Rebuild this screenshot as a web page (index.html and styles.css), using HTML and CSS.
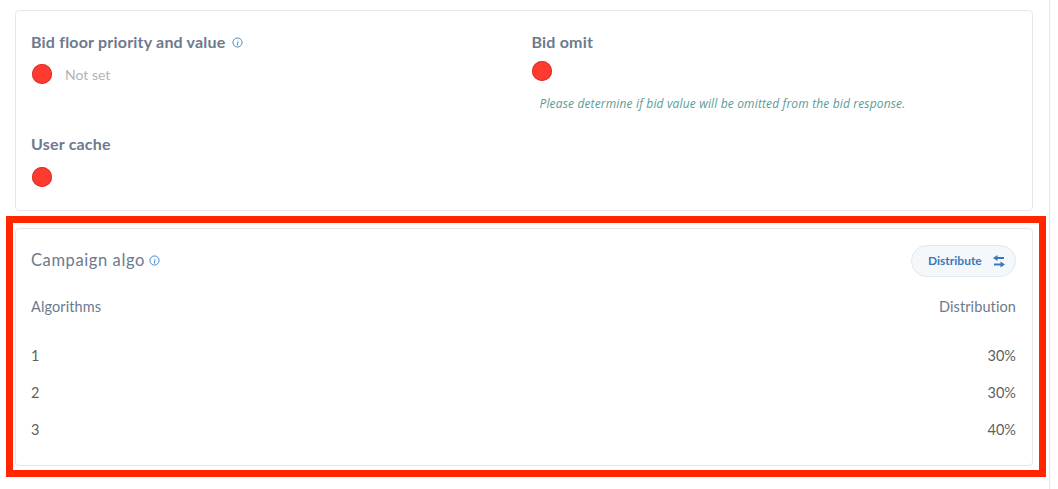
FILE: index.html
```html
<!DOCTYPE html>
<html>
<head>
  <meta charset="UTF-8">
  <title>Campaign settings</title>
  <link rel="stylesheet" href="styles.css">
</head>
<body>
  <div class="page">
    <div class="card card-settings">
      <div class="field">
        <div class="field-label">Bid floor priority and value
          <svg class="info-icon" viewBox="0 0 12 12"><circle cx="6" cy="6" r="5"/><path d="M6.5 3.2v.4M6.1 5.2h.5L5.7 9h.6"/></svg>
        </div>
        <div class="toggle-row toggle-row-first">
          <span class="toggle"></span>
          <span class="not-set">Not set</span>
        </div>
      </div>
      <div class="field">
        <div class="field-label">Bid omit</div>
        <div class="toggle-row">
          <span class="toggle"></span>
        </div>
        <p class="help-text">Please determine if bid value will be omitted from the bid response.</p>
      </div>
      <div class="field field-cache">
        <div class="field-label">User cache</div>
        <div class="toggle-row toggle-row-cache">
          <span class="toggle"></span>
        </div>
      </div>
    </div>

    <div class="highlight">
      <div class="card card-algo">
        <div class="algo-head">
          <div class="algo-title">Campaign algo
            <svg class="info-icon" viewBox="0 0 12 12"><circle cx="6" cy="6" r="5"/><path d="M6.5 3.2v.4M6.1 5.2h.5L5.7 9h.6"/></svg>
          </div>
          <button class="distribute-btn"><span class="btn-text">Distribute</span>
            <svg class="swap-icon" viewBox="0 0 12 13"><path d="M4.5 0L0 3l4.5 3V4H11V2H4.5z"/><path d="M7.5 6.5L12 9.5l-4.5 3v-2H1v-2h6.5z"/></svg>
          </button>
        </div>
        <div class="algo-row algo-row-head"><span>Algorithms</span><span>Distribution</span></div>
        <div class="algo-row algo-row-first"><span>1</span><span>30%</span></div>
        <div class="algo-row"><span>2</span><span>30%</span></div>
        <div class="algo-row"><span>3</span><span>40%</span></div>
      </div>
    </div>
  </div>
</body>
</html>
```

FILE: styles.css
```css
body {
  margin: 0;
  font-family: "Lato", "Open Sans", sans-serif;
  background: #fff;
  overflow: hidden;
}
.page {
  width: 1050px;
  height: 489px;
  box-sizing: border-box;
  border-right: 1px solid #e8e8ea;
  padding-top: 10px;
}
.card {
  width: 1018px;
  box-sizing: border-box;
  background: #fff;
  border: 1px solid #e6e8eb;
  border-radius: 4px;
}
.card-settings {
  margin-left: 15px;
  height: 201px;
  padding: 21px 16px 0 15px;
  display: grid;
  grid-template-columns: 1fr 1fr;
  column-gap: 16px;
  align-content: start;
}
.field {
  height: 102px;
}
.field-cache {
  height: auto;
}
.field-label {
  font-size: 16px;
  font-weight: 700;
  letter-spacing: 0.2px;
  line-height: 20px;
  color: #6c7a8d;
}
.info-icon {
  width: 11px;
  height: 11px;
  margin-left: 2px;
  vertical-align: 0;
  fill: none;
  stroke: #3a82c9;
  stroke-width: 1;
}
.toggle-row {
  display: flex;
  align-items: center;
  margin-top: 9px;
}
.toggle-row-first {
  margin-top: 12px;
  padding-left: 1px;
}
.toggle-row-cache {
  margin-top: 13px;
  padding-left: 1px;
}
.toggle {
  width: 20px;
  height: 20px;
  border-radius: 50%;
  background: #ff3b30;
  box-shadow: inset 0 0 0 1px #d9352c;
}
.not-set {
  margin-left: 13px;
  font-size: 14px;
  color: #b3b3b3;
}
.help-text {
  margin: 16px 0 0 8px;
  font-family: "Open Sans", sans-serif;
  font-size: 12px;
  font-style: italic;
  letter-spacing: 0.15px;
  line-height: 14px;
  color: #5a9c97;
}
.highlight {
  width: 1040px;
  height: 261px;
  box-sizing: border-box;
  margin: 5px 0 0 6px;
  border: 7px solid #ff2600;
  padding: 5px 0 0 2px;
}
.card-algo {
  height: 238px;
  padding: 16px 16px 0 15px;
}
.algo-head {
  display: flex;
  justify-content: space-between;
  align-items: center;
  height: 32px;
}
.algo-title {
  font-size: 16.5px;
  letter-spacing: 0.6px;
  padding-bottom: 2px;
  color: #6c7a8d;
}
.algo-title .info-icon {
  margin-left: -1px;
}
.distribute-btn {
  display: flex;
  align-items: center;
  justify-content: space-between;
  width: 105px;
  height: 32px;
  box-sizing: border-box;
  padding: 0 10px 0 16px;
  font-family: inherit;
  font-size: 12px;
  font-weight: 700;
  color: #3a78b8;
  background: #f5f8fa;
  border: 1px solid #e3e8ec;
  border-radius: 16px;
}
.btn-text {
  padding-bottom: 2px;
}
.swap-icon {
  width: 12px;
  height: 13px;
  fill: #3a78b8;
}
.algo-row {
  display: flex;
  justify-content: space-between;
  font-size: 14.5px;
  line-height: 18px;
  color: #5f5f5f;
  margin-top: 19px;
}
.algo-row-head {
  margin-top: 21px;
  letter-spacing: 0.1px;
  color: #6c7a8d;
}
.algo-row-first {
  margin-top: 31px;
}
```
